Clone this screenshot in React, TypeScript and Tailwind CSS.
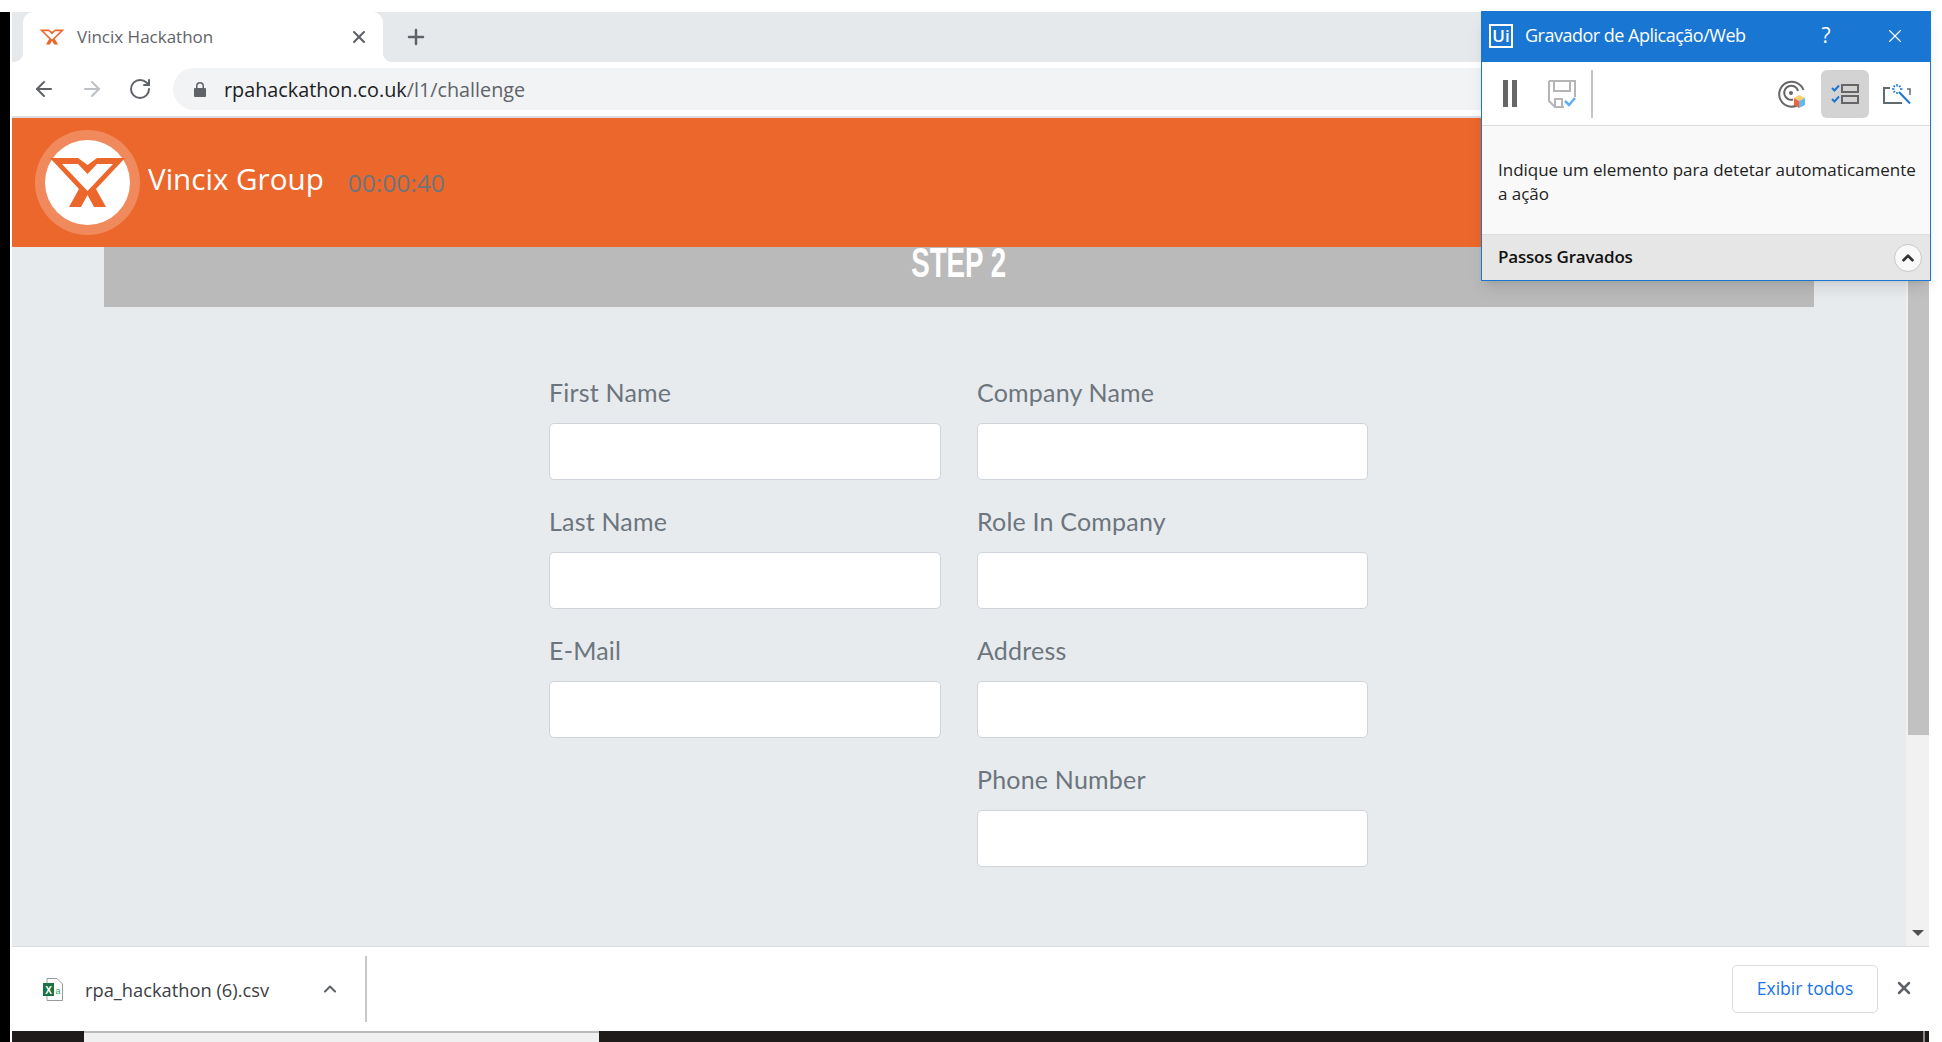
import { ArrowLeft, ArrowRight, ChevronUp, Plus, RotateCw, X } from 'lucide-react'

const leftFields = ['First Name', 'Last Name', 'E-Mail']
const rightFields = ['Company Name', 'Role In Company', 'Address', 'Phone Number']

// Vincix mark, also used stretched for the favicon
function VincixMark({ className }: { className: string }) {
  return (
    <svg viewBox="0 0 85 85" preserveAspectRatio="none" className={className}>
      <path d="M5 18H33L42.5 25L52 18H80L51 49L61 67H49L42.5 55L36 67H24L34 49Z" fill="#ec672b" />
      <path d="M17 24H33L42.5 34L52 24H68L42.5 51Z" fill="#fff" />
    </svg>
  )
}

function Field({ label }: { label: string }) {
  return (
    <div className="flex flex-col">
      <label className="h-[36px] font-['Lato',sans-serif] text-[25px] leading-[35px] tracking-[0.2px] text-[#6c757d]">
        {label}
      </label>
      <input className="mt-3 h-[57px] w-full rounded-[5px] border border-[#ced4da] bg-white" />
    </div>
  )
}

function RecorderToolbar() {
  return (
    <div className="flex h-[64px] items-center border-b border-[#dcdcdc] bg-white">
      <div className="ml-[21px] flex gap-1">
        <div className="h-[27px] w-[5px] bg-[#666]" />
        <div className="h-[27px] w-[5px] bg-[#666]" />
      </div>
      <svg viewBox="0 0 28 28" className="ml-[31px] h-[28px] w-[28px]" fill="none">
        <path d="M1 1H27V17M1 1V21L7 27H16M6 1V11H22V1M7 27V19H14V27" stroke="#b5b5b5" strokeWidth="2" />
        <path d="M17 21L21 25L27 18" stroke="#64aef0" strokeWidth="2.5" />
      </svg>
      <div className="ml-[15px] h-[48px] w-[2px] bg-[#c4c4c4]" />
      <svg viewBox="0 0 28 28" className="ml-[185px] h-[28px] w-[28px]" fill="none">
        <path d="M19 25.5A12.5 12.5 0 1 1 25.5 10" stroke="#666" strokeWidth="2" />
        <path d="M15 19.5A7 7 0 1 1 20 11" stroke="#666" strokeWidth="2" />
        <circle cx="13" cy="13" r="2" fill="#666" />
        <path d="M21 15L27 18L21 21L16 18Z" fill="#f7cf6b" />
        <path d="M16 18L21 21V28L16 25Z" fill="#f0623a" />
        <path d="M27 18L21 21V28L27 25Z" fill="#63b8f0" />
      </svg>
      <div className="ml-[15px] flex h-[48px] w-[48px] items-center justify-center rounded-md bg-[#d3d3d3]">
        <svg viewBox="0 0 28 20" className="h-[20px] w-[28px]" fill="none">
          <path d="M1 4L3.5 6.5L8 1.5M1 15L3.5 17.5L8 12.5" stroke="#1976d2" strokeWidth="2" />
          <rect x="11" y="1" width="16" height="7" stroke="#666" strokeWidth="2" />
          <rect x="11" y="12" width="16" height="7" stroke="#666" strokeWidth="2" />
        </svg>
      </div>
      <svg viewBox="0 0 28 20" className="ml-[14px] h-[20px] w-[28px]" fill="none">
        <path d="M7 4H1V19H19" stroke="#5f6b73" strokeWidth="2" />
        <path d="M24 5H27V11" stroke="#5f6b73" strokeWidth="1.5" />
        <path d="M16 8L27 19.5" stroke="#1976d2" strokeWidth="2" />
        <path
          d="M14 0V2.5M14 8V10M9 5H11.5M17 5H19.5M10.5 1.5L12 3M17.5 1.5L16 3M10.5 8.5L12 7"
          stroke="#1976d2"
          strokeWidth="1.5"
        />
      </svg>
    </div>
  )
}

// Floating UiPath recorder window
function Recorder() {
  return (
    <div className="absolute top-[11px] left-[1481px] flex h-[270px] w-[450px] flex-col border-[1.5px] border-[#1976d2] shadow-lg">
      <div className="flex h-[50px] shrink-0 items-center bg-[#1976d2] pb-[3px] text-white">
        <div className="ml-[7px] flex h-[24px] w-[24px] items-center justify-center border-2 border-white font-['Open_Sans',sans-serif] text-[17px] leading-none font-semibold">
          Ui
        </div>
        <span className="ml-[12px] w-[286px] font-['Open_Sans',sans-serif] text-[18px] tracking-[-0.5px]">
          Gravador de Aplicação/Web
        </span>
        <span className="w-[30px] text-center font-['Open_Sans',sans-serif] text-[21px]">?</span>
        <X className="ml-[43px] h-[22px] w-[22px]" strokeWidth={1.2} />
      </div>
      <RecorderToolbar />
      <div className="flex h-[108px] items-center bg-[#f9f9f9] pt-[3px] pr-[2px] pl-[16px] font-['Open_Sans',sans-serif] text-[17px] leading-[24px] tracking-[-0.02px] text-[#222]">
        <p>Indique um elemento para detetar automaticamente a ação</p>
      </div>
      <div className="flex flex-1 items-center justify-between border-t border-[#dcdcdc] bg-[#e6e6e6] pr-[8px] pl-[16px]">
        <span className="-translate-y-[1px] font-['Open_Sans',sans-serif] text-[17px] font-semibold tracking-[-0.2px] text-[#111]">
          Passos Gravados
        </span>
        <div className="flex h-[28px] w-[28px] items-center justify-center rounded-full border border-[#c8c8c8] bg-[#f9f9f9]">
          <ChevronUp className="h-[18px] w-[18px] text-[#333]" strokeWidth={3.5} />
        </div>
      </div>
    </div>
  )
}

export default function App() {
  return (
    <div className="relative flex h-[1042px] w-[1942px] overflow-hidden bg-white pt-3">
      <div className="h-full w-[10px] shrink-0 bg-black" />
      <div className="ml-[2px] flex h-[1030px] w-[1917px] flex-col">
        {/* Tab strip */}
        <div className="flex h-[50px] shrink-0 items-stretch bg-[#e6e9ec] pl-[11px]">
          <div className="relative flex w-[360px] items-center rounded-t-[10px] bg-white pl-[18px]">
            <div className="absolute bottom-0 -left-[10px] h-[10px] w-[10px] bg-[radial-gradient(circle_at_0_0,#e6e9ec_10px,#fff_10.5px)]" />
            <div className="absolute -right-[10px] bottom-0 h-[10px] w-[10px] bg-[radial-gradient(circle_at_100%_0,#e6e9ec_10px,#fff_10.5px)]" />
            <VincixMark className="h-[26px] w-[28px] shrink-0 -translate-x-[3px]" />
            <span className="ml-[8px] font-['Open_Sans',sans-serif] text-[17px] text-[#5f6368]">Vincix Hackathon</span>
            <X className="absolute right-[14px] h-[20px] w-[20px] text-[#5f6368]" strokeWidth={2.5} />
          </div>
          <Plus className="ml-[21px] h-[24px] w-[24px] self-center text-[#5f6368]" strokeWidth={2.5} />
        </div>

        {/* Address bar */}
        <div className="flex h-[54px] shrink-0 items-center bg-white pl-[19px]">
          <ArrowLeft className="h-[24px] w-[26px] text-[#5f6368]" strokeWidth={2} />
          <ArrowRight className="ml-[22px] h-[24px] w-[26px] text-[#bdc1c6]" strokeWidth={2} />
          <RotateCw className="ml-[23px] h-[24px] w-[24px] text-[#5f6368]" strokeWidth={2} />
          <div className="ml-[21px] flex h-[42px] flex-1 items-center rounded-l-full bg-[#f1f3f4] pl-[21px]">
            <svg viewBox="0 0 12 15" className="h-[15px] w-[12px]" fill="#5f6368">
              <path d="M1 6H2V4A4 4 0 0 1 10 4V6H11A1 1 0 0 1 12 7V14A1 1 0 0 1 11 15H1A1 1 0 0 1 0 14V7A1 1 0 0 1 1 6ZM3.5 6H8.5V4A2.5 2.5 0 0 0 3.5 4Z" />
            </svg>
            <span className="ml-[18px] translate-y-[1px] font-['Open_Sans',sans-serif] text-[19.8px] text-[#202124]">
              rpahackathon.co.uk<span className="text-[#5f6368]">/l1/challenge</span>
            </span>
          </div>
        </div>
        <div className="h-[2px] shrink-0 bg-[#dadce0]" />

        {/* Page */}
        <div className="flex min-h-0 flex-1">
          <main className="flex min-w-0 flex-1 flex-col bg-[#e8ebee]">
            <header className="flex h-[129px] shrink-0 items-center bg-[#ec672b] pl-[23px]">
              <div className="flex h-[105px] w-[105px] items-center justify-center rounded-full bg-[#f08a5d]">
                <div className="h-[85px] w-[85px] rounded-full bg-white">
                  <VincixMark className="h-[85px] w-[85px]" />
                </div>
              </div>
              <span className="ml-[8px] -translate-y-[3px] font-['Open_Sans',sans-serif] text-[29.6px] text-white">
                Vincix Group
              </span>
              <span className="ml-[24px] translate-y-[1px] font-['Open_Sans',sans-serif] text-[24.5px] text-[#6c757d]">
                00:00:40
              </span>
            </header>
            <div className="mr-[92px] ml-[92px] flex h-[60px] shrink-0 justify-center bg-[#bababa]">
              <span className="h-[32px] -translate-y-[1px] scale-x-[0.645] font-['Liberation_Sans_Narrow','Liberation_Sans',sans-serif] text-[43px] leading-[32px] font-bold text-white">
                STEP 2
              </span>
            </div>
            <div className="mt-[68px] ml-[537px] flex gap-[36px]">
              <div className="flex w-[392px] flex-col gap-[24px]">
                {leftFields.map((name) => (
                  <Field key={name} label={name} />
                ))}
              </div>
              <div className="flex w-[391px] flex-col gap-[24px]">
                {rightFields.map((name) => (
                  <Field key={name} label={name} />
                ))}
              </div>
            </div>
          </main>
          <div className="flex w-[23px] shrink-0 flex-col items-end bg-[#f1f1f1] pt-[22px] pb-[10px]">
            <div className="h-[595px] w-[21px] bg-[#c1c1c1]" />
            <div className="mt-auto mr-[5px] h-0 w-0 border-x-[6px] border-t-[6px] border-x-transparent border-t-[#505050]" />
          </div>
        </div>

        {/* Download shelf */}
        <div className="flex h-[85px] shrink-0 items-center border-t border-[#dadce0] bg-white">
          <svg viewBox="0 0 20 23" className="ml-[31px] h-[23px] w-[20px]" fill="none">
            <path d="M4 .5H14L19.5 6V22.5H4Z" fill="#fff" stroke="#9a9a9a" />
            <rect x="0" y="5" width="11" height="13" fill="#1d7044" />
            <text x="5.5" y="15.5" textAnchor="middle" fontSize="10" fontWeight="700" fill="#fff" fontFamily="Liberation Sans">
              X
            </text>
            <text x="15" y="15.5" textAnchor="middle" fontSize="9" fill="#2fa56c" fontFamily="Liberation Sans">
              a
            </text>
          </svg>
          <span className="ml-[22px] w-[235px] translate-y-[1px] font-['Open_Sans',sans-serif] text-[18.3px] text-[#3c4043]">
            rpa_hackathon (6).csv
          </span>
          <ChevronUp className="h-[20px] w-[20px] text-[#5f6368]" strokeWidth={2.5} />
          <div className="ml-[25px] h-[66px] w-[2px] bg-[#c8c8c8]" />
          <button className="ml-auto h-[48px] w-[146px] rounded-[5px] border border-[#dadce0] bg-white pb-[2px] font-['Open_Sans',sans-serif] text-[17.5px] font-medium text-[#1a73e8]">
            Exibir todos
          </button>
          <X className="mr-[15px] ml-[16px] h-[20px] w-[20px] -translate-y-[1px] text-[#5f6368]" strokeWidth={3} />
        </div>

        {/* Taskbar, cut off by the screenshot */}
        <div className="flex h-[11px] shrink-0 overflow-hidden bg-[#1f1b1a]">
          <div className="ml-[72px] h-full w-[515px] border-t-2 border-[#bababa] bg-[#f0f0f0]" />
          <span className="ml-[1178px] pt-[6px] font-['Open_Sans',sans-serif] text-[15px] leading-[20px] text-white">
            10:12
          </span>
          <div className="mr-[4px] ml-auto h-full w-[2px] bg-[#888]" />
        </div>
      </div>
      <Recorder />
    </div>
  )
}
